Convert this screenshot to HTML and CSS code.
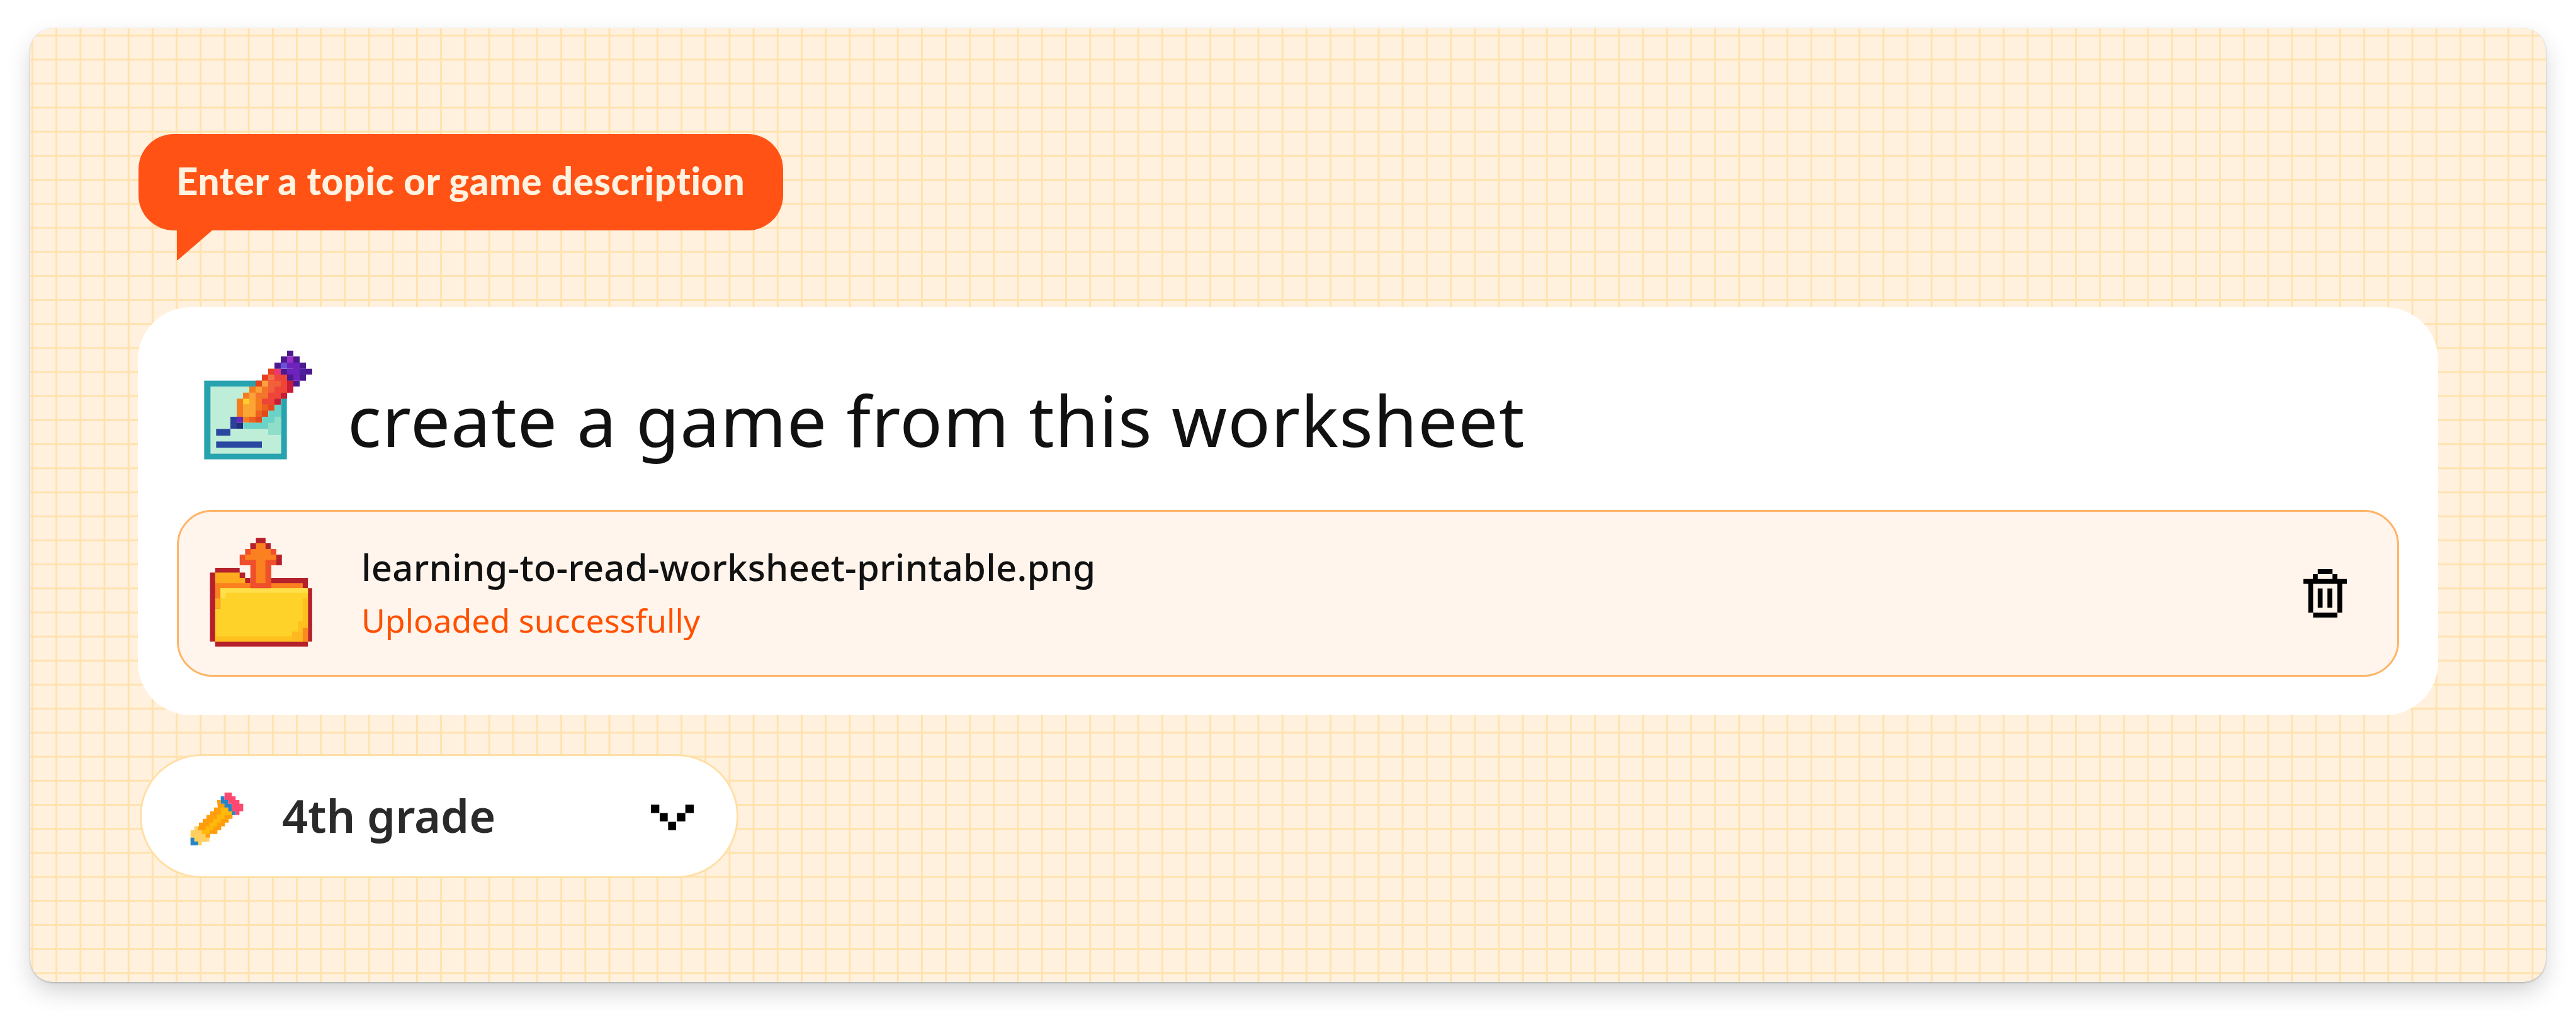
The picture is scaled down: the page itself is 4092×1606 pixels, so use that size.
FILE: index.html
```html
<!DOCTYPE html>
<html lang="en">
<head>
<meta charset="utf-8">
<title>Enter a topic</title>
<link rel="stylesheet" href="styles.css">
</head>
<body>
<main class="panel">
  <div class="bubble">Enter a topic or game description</div>
  <section class="prompt">
    <div class="prompt-head">
      <svg class="ico-write" viewBox="90 70 540 540" aria-hidden="true">
        <rect x="103" y="225" width="394" height="375" fill="#26a3ae"/>
        <rect x="133" y="253" width="337" height="320" fill="#bfeed8"/>
        <path d="M470 310h-30v29h-30v29h-30v29h-90v29h-30v29h30h118v29h62z" fill="#8fdfc8"/>
        <path d="M470 339h-30v29h-30v29h-30v29h-90v29h118v-29h30v-29h32z" fill="#6bd2c8"/>
        <rect x="160" y="455" width="68" height="32" fill="#2a48a0"/>
        <rect x="160" y="515" width="218" height="30" fill="#2a48a0"/>
        <rect x="228" y="397" width="30" height="57" fill="#2b3f9b"/>
        <rect x="258" y="397" width="30" height="29" fill="#6a28b8"/>
        <rect x="258" y="426" width="30" height="28" fill="#1f2f80"/>
        <path d="M258 311h30v-29h30v-29h30v-28h30v-29h30v-28h60v28h60v29h30v28h-30v29h-30v29h-30v28h-30v29h-30v29h-30v28h-90v-28h-30z" fill="#f57c1e"/>
        <path d="M408 168h30v28h-30zM378 196h30v29h-30zM348 225h30v28h-30z" fill="#e8401e"/>
        <path d="M438 168h30v28h-30z" fill="#e83878"/>
        <path d="M408 196h30v29h-30z" fill="#f5704a"/>
        <path d="M438 196h60v29h30v28h-30v29h-30v29h-30v28h-60v-86h30v-29h30z" fill="#ee4538"/>
        <path d="M408 225h60v28h-30v29h-30z" fill="#f2603a"/>
        <path d="M378 253h30v29h-30zM348 282h60v29h-60z" fill="#f4752a"/>
        <path d="M378 225h30v28h-30zM348 253h30v29h-30zM318 282h30v29h-30z" fill="#fba03c"/>
        <path d="M288 311h30v28h-30z" fill="#ffcc30"/>
        <path d="M288 339h60v58h-60zM318 311h30v28h-30z" fill="#fba535"/>
        <path d="M378 339h30v29h-30zM348 368h30v29h-30zM318 397h30v28h-30z" fill="#ee6020"/>
        <path d="M408 339h30v29h-30zM378 368h30v29h-30zM348 397h30v28h-30z" fill="#e04a1c"/>
        <path d="M498 225h30v28h-30zM498 253h30v29h-30zM468 282h30v29h-30zM438 311h30v28h-30z" fill="#c81c38"/>
        <path d="M498 82h30v28h-30zM468 110h30v29h-30zM438 139h30v29h-30zM468 168h30v28h-30zM498 196h30v29h-30zM528 110h30v29h-30zM558 139h30v29h-30zM588 168h30v28h-30zM558 196h30v29h-30zM528 225h30v28h-30z" fill="#4c1a8e"/>
        <path d="M498 139h60v29h30v28h-60v-28h-30z" fill="#6d24bd"/>
        <path d="M498 168h60v28h-60zM528 196h30v29h-30z" fill="#6d24bd"/>
        <path d="M558 168h30v28h-30z" fill="#4f1f9f"/>
        <rect x="498" y="110" width="30" height="29" fill="#9b30c8"/>
        <rect x="468" y="139" width="30" height="29" fill="#6a50d8"/>
      </svg>
      <h1 class="prompt-text">create a game from this worksheet</h1>
    </div>
    <div class="file-row">
      <svg class="ico-folder" viewBox="210 185 510 535" aria-hidden="true">
        <path d="M245 335h117v23h26v25h25v25h100v-25h175v49h20v256h-20v24h-443v-24h-25v-330h25z" fill="#b4202c"/>
        <path d="M245 358h117v25h26v25h25v24h-168z" fill="#ffab1e"/>
        <path d="M245 408h168v24h-143v48h-25zM513 408h150v24h-150z" fill="#fb8020"/>
        <rect x="245" y="480" width="25" height="50" fill="#ffab1e"/>
        <path d="M270 432h418v256h-443v-158h25z" fill="#ffd22a"/>
        <path d="M270 432h418v23h-393v25h-25z" fill="#ffdf4a"/>
        <path d="M663 480h25v110h-25zM640 590h48v50h-48zM245 662h367v26h-367z" fill="#ffc01f"/>
        <path d="M612 640h51v48h-51z" fill="#ffb820"/>
        <rect x="663" y="622" width="25" height="66" fill="#fb8a20"/>
        <path d="M440 193h45v25h25v27h27v27h26v51h-50v109h-100v-109h-51v-51h26v-27h25v-27h27z" fill="#ef4f2a"/>
        <path d="M440 193h45v25h-45zM413 218h27v27h-27zM485 218h25v27h-25zM537 272h26v51h-26z" fill="#b4202c"/>
        <path d="M440 218h45v27h25v27h27v26h-52v110h-45v-110h-52v-26h26v-27h26z" fill="#fb8020"/>
      </svg>
      <div class="file-meta">
        <div class="file-name">learning-to-read-worksheet-printable.png</div>
        <div class="file-status">Uploaded successfully</div>
      </div>
      <svg class="ico-trash" viewBox="297 131 206 230" aria-hidden="true">
        <path d="M365 131h70v24h23v23h45v23h-22v137h-23v23h-115v-23h-23v-137h-23v-23h45v-23h23zM365 155v23h70v-23zM343 201v137h115v-137zM365 223h23v92h-23zM411 223h23v92h-23z" fill="#000" fill-rule="evenodd"/>
      </svg>
    </div>
  </section>
  <div class="grade">
    <svg class="ico-pencil" viewBox="0 0 360 360" aria-hidden="true">
      <path d="M194 93h18v17h20v18h36v18h15v18h-15v18h-18v18h-18v18h-18v18h-18v18h-35v18h-17v18h-54v-72h18v-18h18v-18h18v-18h18v-18h18v-18h18z" fill="#ff9e0a"/>
      <path d="M212 128h36v18h17v18h-35v18h-18v18h-18v18h-18v18h-18v18h-36v-18h18v-18h18v-18h18v-18h18v-18h18z" fill="#ffb90a"/>
      <path d="M86 218h18v18h18v18h18v18h18v18h-36v18h-18v-18h-36v-54h18z" fill="#ffd060"/>
      <path d="M68 272h18v18h18v18h-36z" fill="#2485c8"/>
      <path d="M212 75h18v18h18v17h17v36h18v18h-18v-18h-17v-18h-18v-18h-18z" fill="#2485c8"/>
      <path d="M230 57h35v18h18v18h18v17h18v36h-18v18h-18v-18h-18v-36h-17v-17h-18z" fill="#ff4870"/>
    </svg>
    <span class="grade-label">4th grade</span>
    <svg class="ico-chev" viewBox="43 55 204 122" aria-hidden="true">
      <path d="M43 55h40v40h-40zM85 95h38v40h-38zM125 137h38v40h-38zM167 95h40v40h-40zM207 55h40v40h-40z" fill="#000"/>
    </svg>
  </div>
</main>
</body>
</html>
```
FILE: styles.css
```css
* { box-sizing: border-box; margin: 0; padding: 0; }
html, body { width: 4092px; height: 1606px; background: #fff; overflow: hidden; }
body { padding: 45px 48px 46px; font-family: "Noto Sans", sans-serif; }
.panel {
  width: 3996px; height: 1515px; border-radius: 36px; padding: 168px 171px 0;
  background-color: #fff1de;
  background-image:
    linear-gradient(#ffe2ae 2.6px, transparent 2.6px),
    linear-gradient(90deg, #ffe2ae 2.6px, transparent 2.6px);
  background-size: 38.2px 38.2px;
  background-position: 2px 10px;
  box-shadow: 0 16px 40px -4px rgba(0,0,0,.2), 0 1px 3px rgba(0,0,0,.25);
}
.bubble {
  position: relative; width: 1024px; height: 153px; border-radius: 56px; margin-left: 1px;
  background: #ff5214; color: #fff2e0; padding: 0 60px 5px;
  display: flex; align-items: center;
  font-family: "Lato", sans-serif; font-weight: 900; font-size: 60px; letter-spacing: .6px; white-space: nowrap;
}
.bubble::after {
  content: ""; position: absolute; left: 61px; top: 153px; width: 56px; height: 47px;
  background: #ff5214; clip-path: polygon(0 0, 100% 0, 3% 100%, 0 100%);
}
.prompt {
  margin-top: 122px; width: 3654px; height: 648px; background: #fff; border-radius: 84px;
  padding: 65px 62px 0;
}
.prompt-head { display: flex; align-items: center; height: 180px; gap: 52px; margin: 0 0 77px 39px; }
.ico-write { width: 180px; height: 180px; filter: blur(.7px); flex: none; }
.prompt-text { font-weight: 400; font-size: 112px; letter-spacing: 1.1px; color: #111; white-space: nowrap; padding-top: 46px; }
.file-row {
  display: flex; align-items: center; width: 3530px; height: 265px; border: 3px solid #ffb366;
  border-radius: 56px; background: #fff5ec; padding: 0 80px 0 46px;
}
.ico-folder { width: 170px; height: 178px; flex: none; filter: blur(.7px); margin-bottom: 4px; }
.file-meta { margin-left: 74px; flex: 1; margin-bottom: 5px; }
.file-name { font-size: 58px; font-weight: 500; letter-spacing: .2px; color: #111; }
.file-status { font-size: 51.8px; color: #ff5000; margin-top: 10px; }
.ico-trash { width: 69px; height: 77px; flex: none; }
.grade {
  margin: 62px 0 0 3px; width: 951px; height: 197px; border-radius: 98px; border: 3px solid #ffdfa6;
  background: #fff; display: flex; align-items: center; padding: 0 68px 0 55px;
}
.ico-pencil { width: 120px; height: 120px; flex: none; margin-top: 7px; filter: blur(.7px); }
.grade-label { margin-left: 48px; flex: 1; font-size: 72px; font-weight: 600; color: #2a2a2a; margin-bottom: 4px; }
.ico-chev { width: 68px; height: 41px; flex: none; margin-top: 4px; }
```
